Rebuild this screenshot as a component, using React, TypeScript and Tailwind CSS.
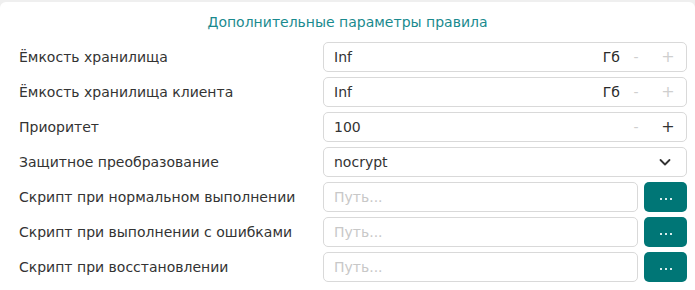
import React from "react";

const font = { fontFamily: '"DejaVu Sans", sans-serif' };

function NumField({ value, unit, plusActive }: { value: string; unit?: string; plusActive?: boolean }) {
  return (
    <div className="flex h-[30px] items-center rounded-[5px] border border-[#d9d9d9] bg-white pl-[10px] pr-[8px] text-[14px] text-[#333]">
      <span className="flex-1">{value}</span>
      {unit && <span className="mr-[6px] font-medium text-[#2a2a2a]">{unit}</span>}
      <span className="w-[20px] text-center text-[#cfcfcf]">-</span>
      <span className={"ml-[12px] w-[20px] text-center text-[16px] " + (plusActive ? "text-[#333]" : "text-[#cfcfcf]")}>+</span>
    </div>
  );
}

function SelectField({ value }: { value: string }) {
  return (
    <div className="flex h-[30px] items-center rounded-[5px] border border-[#d9d9d9] bg-white pl-[10px] pr-[14px] text-[14px] text-[#333]">
      <span className="flex-1">{value}</span>
      <svg width="14" height="14" viewBox="0 0 14 14" fill="none" stroke="#333" strokeWidth="1.8" strokeLinecap="round" strokeLinejoin="round">
        <path d="M2.5 5l4.5 4.5L11.5 5" />
      </svg>
    </div>
  );
}

function PathField() {
  return (
    <div className="flex h-[30px] items-center gap-[6px]">
      <div className="flex h-full flex-1 items-center rounded-[5px] border border-[#d9d9d9] bg-white pl-[10px] text-[14px] text-[#c8c8c8]">
        Путь...
      </div>
      <button className="flex h-full w-[43px] items-center justify-center gap-[3px] rounded-[5px] bg-[#007676] pt-[4px]">
        <span className="h-[2px] w-[2px] bg-[#d6ecec]" />
        <span className="h-[2px] w-[2px] bg-[#d6ecec]" />
        <span className="h-[2px] w-[2px] bg-[#d6ecec]" />
      </button>
    </div>
  );
}

export default function App() {
  const rows: [string, React.ReactNode][] = [
    ["Ёмкость хранилища", <NumField value="Inf" unit="Гб" />],
    ["Ёмкость хранилища клиента", <NumField value="Inf" unit="Гб" />],
    ["Приоритет", <NumField value="100" plusActive />],
    ["Защитное преобразование", <SelectField value="nocrypt" />],
    ["Скрипт при нормальном выполнении", <PathField />],
    ["Скрипт при выполнении с ошибками", <PathField />],
    ["Скрипт при восстановлении", <PathField />],
  ];
  return (
    <div className="h-[290px] w-[695px] bg-[#efefef] pt-[2px]" style={font}>
      <div className="h-[288px] rounded-t-[6px] bg-white pl-[19px] pr-[8px]">
        <div className="flex h-[40px] items-center justify-center pr-[11px] text-[14px] text-[#1a8a8e]">
          Дополнительные параметры правила
        </div>
        <div className="flex flex-col gap-[5px]">
          {rows.map(([label, field], i) => (
            <div key={i} className="grid grid-cols-[304px_1fr] items-center">
              <span className="text-[14px] text-[#333]">{label}</span>
              {field}
            </div>
          ))}
        </div>
      </div>
    </div>
  );
}
